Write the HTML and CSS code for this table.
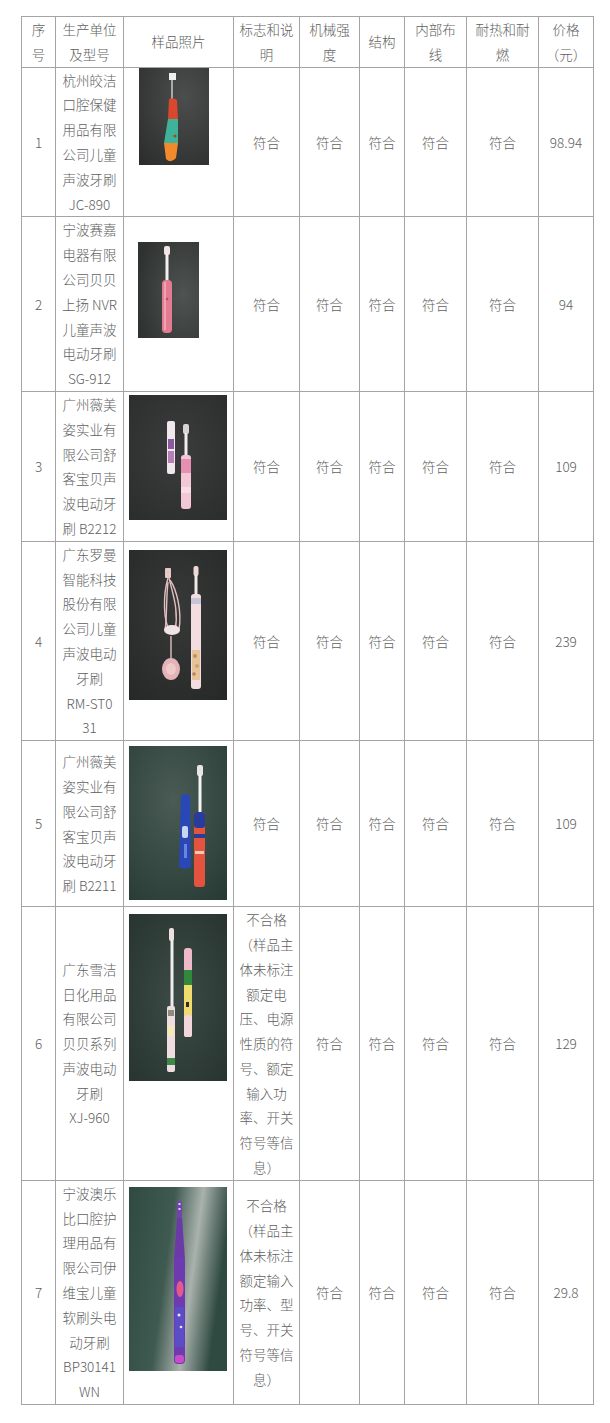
FILE: index.html
```html
<!DOCTYPE html>
<html lang="zh-CN">
<head>
<meta charset="utf-8">
<title>儿童电动牙刷比较试验结果</title>
<link rel="stylesheet" href="styles.css">
</head>
<body>
<table class="spec">
  <colgroup>
    <col class="c-no"><col class="c-maker"><col class="c-photo"><col class="c-mark"><col class="c-mech"><col class="c-struct"><col class="c-wire"><col class="c-heat"><col class="c-price">
  </colgroup>
  <thead>
    <tr>
      <th>序<br>号</th>
      <th>生产单位<br>及型号</th>
      <th>样品照片</th>
      <th>标志和说<br>明</th>
      <th>机械强<br>度</th>
      <th>结构</th>
      <th>内部布<br>线</th>
      <th>耐热和耐<br>燃</th>
      <th>价格<br>（元）</th>
    </tr>
  </thead>
  <tbody>
    <tr>
      <td>1</td>
      <td>杭州皎洁<br>口腔保健<br>用品有限<br>公司儿童<br>声波牙刷<br>JC-890</td>
      <td class="pic">
        <svg class="photo photo-1" viewBox="0 0 70 97">
          <defs>
            <radialGradient id="bg1" cx="0.65" cy="0.3" r="0.9">
              <stop offset="0" stop-color="#4b4e4d"/>
              <stop offset="1" stop-color="#2b2e2d"/>
            </radialGradient>
          </defs>
          <rect width="70" height="97" fill="url(#bg1)"/>
          <rect x="30" y="5" width="7" height="7" fill="#eeeeee"/>
          <rect x="32" y="12" width="2" height="20" fill="#a9a9a9"/>
          <path d="M30 31 Q34 29 38 32 L39 51 L29 51 Z" fill="#d9472e"/>
          <path d="M29 51 L39 51 L39 75 L25 75 Z" fill="#3fb39a"/>
          <path d="M25 75 L39 75 L37 90 Q32 96 27 91 Z" fill="#f08a2c"/>
          <circle cx="36" cy="68" r="1.6" fill="#9a4a22"/>
        </svg>
      </td>
      <td>符合</td><td>符合</td><td>符合</td><td>符合</td><td>符合</td>
      <td>98.94</td>
    </tr>
    <tr>
      <td>2</td>
      <td>宁波赛嘉<br>电器有限<br>公司贝贝<br>上扬 NVR<br>儿童声波<br>电动牙刷<br>SG-912</td>
      <td class="pic">
        <svg class="photo photo-2" viewBox="0 0 61 96">
          <defs>
            <radialGradient id="bg2" cx="0.75" cy="0.55" r="0.8">
              <stop offset="0" stop-color="#4f5452"/>
              <stop offset="1" stop-color="#2e3331"/>
            </radialGradient>
          </defs>
          <rect width="61" height="96" fill="url(#bg2)"/>
          <rect x="26" y="4" width="6" height="9" rx="2" fill="#f3e4e6"/>
          <rect x="27.5" y="12" width="3" height="27" fill="#f4f0f0"/>
          <rect x="24" y="38" width="10" height="53" rx="4" fill="#e47b90"/>
          <rect x="26" y="40" width="2" height="48" fill="#f0a3b2"/>
          <circle cx="29" cy="57" r="1.3" fill="#b94f66"/>
        </svg>
      </td>
      <td>符合</td><td>符合</td><td>符合</td><td>符合</td><td>符合</td>
      <td>94</td>
    </tr>
    <tr>
      <td>3</td>
      <td>广州薇美<br>姿实业有<br>限公司舒<br>客宝贝声<br>波电动牙<br>刷 B2212</td>
      <td class="pic">
        <svg class="photo photo-3" viewBox="0 0 98 125">
          <defs>
            <radialGradient id="bg3" cx="0.5" cy="0.45" r="0.8">
              <stop offset="0" stop-color="#3b3d3c"/>
              <stop offset="1" stop-color="#2a2c2b"/>
            </radialGradient>
          </defs>
          <rect width="98" height="125" fill="url(#bg3)"/>
          <rect x="38" y="26" width="8" height="53" rx="2" fill="#f1e8ee"/>
          <rect x="39" y="44" width="6" height="10" fill="#8a5a9e"/>
          <rect x="39" y="56" width="6" height="12" fill="#b77fb8"/>
          <rect x="54" y="29" width="6" height="10" rx="2" fill="#d9d3d6"/>
          <rect x="55.5" y="38" width="3" height="24" fill="#f1ecee"/>
          <rect x="52" y="60" width="10" height="54" rx="3" fill="#f2c7d6"/>
          <rect x="52" y="64" width="10" height="14" fill="#e58fb3"/>
          <rect x="52" y="92" width="10" height="6" fill="#f7dbe6"/>
        </svg>
      </td>
      <td>符合</td><td>符合</td><td>符合</td><td>符合</td><td>符合</td>
      <td>109</td>
    </tr>
    <tr>
      <td>4</td>
      <td>广东罗曼<br>智能科技<br>股份有限<br>公司儿童<br>声波电动<br>牙刷<br>RM-ST0<br>31</td>
      <td class="pic">
        <svg class="photo photo-4" viewBox="0 0 98 150">
          <defs>
            <radialGradient id="bg4" cx="0.5" cy="0.4" r="0.8">
              <stop offset="0" stop-color="#363938"/>
              <stop offset="1" stop-color="#262827"/>
            </radialGradient>
          </defs>
          <rect width="98" height="150" fill="url(#bg4)"/>
          <rect x="36" y="18" width="6" height="10" rx="1" fill="#e8c7c7"/>
          <g fill="none" stroke="#e4bfc1" stroke-width="1.4">
            <path d="M39 28 C34 45 34 70 41 82"/>
            <path d="M40 28 C44 45 50 60 46 82"/>
            <path d="M41 30 C48 40 53 62 50 80"/>
            <path d="M39 32 C37 50 38 70 36 80"/>
            <path d="M42 86 L42 108"/>
          </g>
          <ellipse cx="43" cy="80" rx="8" ry="5" fill="#f2e4e6"/>
          <ellipse cx="42" cy="119" rx="9" ry="11" fill="#e4b3b7"/>
          <ellipse cx="42" cy="119" rx="5" ry="6" fill="#eecaca"/>
          <rect x="64.5" y="16" width="5" height="10" rx="2" fill="#efd8d8"/>
          <rect x="65.5" y="25" width="3" height="20" fill="#f4e7e7"/>
          <rect x="62" y="44" width="10" height="95" rx="3" fill="#f3dde0"/>
          <rect x="62" y="48" width="10" height="6" fill="#c8c4d8"/>
          <rect x="63" y="100" width="8" height="30" fill="#e6c49a"/>
          <circle cx="66" cy="106" r="2" fill="#c78d6a"/>
          <circle cx="68" cy="116" r="2" fill="#d2a071"/>
          <circle cx="65" cy="124" r="1.8" fill="#b9825e"/>
        </svg>
      </td>
      <td>符合</td><td>符合</td><td>符合</td><td>符合</td><td>符合</td>
      <td>239</td>
    </tr>
    <tr>
      <td>5</td>
      <td>广州薇美<br>姿实业有<br>限公司舒<br>客宝贝声<br>波电动牙<br>刷 B2211</td>
      <td class="pic">
        <svg class="photo photo-5" viewBox="0 0 98 154">
          <defs>
            <radialGradient id="bg5" cx="0.45" cy="0.35" r="0.85">
              <stop offset="0" stop-color="#4a5b55"/>
              <stop offset="1" stop-color="#263a33"/>
            </radialGradient>
          </defs>
          <rect width="98" height="154" fill="url(#bg5)"/>
          <path d="M52 50 Q56 46 61 50 L62 121 Q56 124 50 121 Z" fill="#2a47b8"/>
          <rect x="53" y="80" width="6" height="12" rx="2" fill="#c9d4f0"/>
          <rect x="55" y="98" width="3" height="14" fill="#6a86d8"/>
          <rect x="68" y="19" width="6" height="11" rx="2" fill="#e6e6e6"/>
          <rect x="69.5" y="29" width="3" height="38" fill="#f4f4f4"/>
          <rect x="65" y="66" width="11" height="75" rx="3" fill="#e3533d"/>
          <rect x="65" y="66" width="11" height="16" rx="3" fill="#283c9c"/>
          <rect x="65" y="88" width="11" height="4" fill="#283c9c"/>
          <rect x="66" y="105" width="9" height="3" fill="#f4c9b7"/>
        </svg>
      </td>
      <td>符合</td><td>符合</td><td>符合</td><td>符合</td><td>符合</td>
      <td>109</td>
    </tr>
    <tr>
      <td>6</td>
      <td>广东雪洁<br>日化用品<br>有限公司<br>贝贝系列<br>声波电动<br>牙刷<br>XJ-960</td>
      <td class="pic">
        <svg class="photo photo-6" viewBox="0 0 98 167">
          <defs>
            <radialGradient id="bg6" cx="0.5" cy="0.5" r="0.8">
              <stop offset="0" stop-color="#3d4b46"/>
              <stop offset="1" stop-color="#24312c"/>
            </radialGradient>
          </defs>
          <rect width="98" height="167" fill="url(#bg6)"/>
          <rect x="40" y="14" width="5" height="13" rx="2" fill="#eedfe0"/>
          <rect x="41.5" y="26" width="3" height="68" fill="#eeeeee"/>
          <rect x="38" y="92" width="8" height="66" rx="2" fill="#f0dde2"/>
          <rect x="39" y="96" width="6" height="6" fill="#8d8d7a"/>
          <rect x="39" y="112" width="6" height="10" fill="#f5e9b8"/>
          <rect x="38" y="144" width="8" height="7" fill="#3c8a46"/>
          <rect x="55" y="34" width="8" height="89" rx="3" fill="#eeb9c9"/>
          <rect x="55" y="56" width="8" height="15" fill="#2f8a3c"/>
          <rect x="55" y="71" width="8" height="30" fill="#f1dc6e"/>
          <rect x="57" y="88" width="3" height="5" fill="#2e2e2e"/>
          <rect x="55" y="101" width="8" height="22" rx="2" fill="#f1d6dc"/>
        </svg>
      </td>
      <td>不合格<br>（样品主<br>体未标注<br>额定电<br>压、电源<br>性质的符<br>号、额定<br>输入功<br>率、开关<br>符号等信<br>息）</td>
      <td>符合</td><td>符合</td><td>符合</td><td>符合</td>
      <td>129</td>
    </tr>
    <tr>
      <td>7</td>
      <td>宁波澳乐<br>比口腔护<br>理用品有<br>限公司伊<br>维宝儿童<br>软刷头电<br>动牙刷<br>BP30141<br>WN</td>
      <td class="pic">
        <svg class="photo photo-7" viewBox="0 0 98 184">
          <defs>
            <linearGradient id="bg7" x1="0" y1="0" x2="1" y2="0.25">
              <stop offset="0" stop-color="#2f4a41"/>
              <stop offset="0.45" stop-color="#3f5a51"/>
              <stop offset="0.72" stop-color="#aab2ad"/>
              <stop offset="0.85" stop-color="#6d7f78"/>
              <stop offset="1" stop-color="#2f4a41"/>
            </linearGradient>
          </defs>
          <rect width="98" height="184" fill="url(#bg7)"/>
          <rect x="48" y="14" width="5" height="18" rx="2" fill="#7442b0"/>
          <rect x="49.5" y="16" width="2" height="2" fill="#d8d8f2"/>
          <rect x="49.5" y="21" width="2" height="2" fill="#d8d8f2"/>
          <path d="M48 31 L53 31 L56 72 L45 72 Z" fill="#6b3aa6"/>
          <rect x="45" y="70" width="11" height="107" rx="4" fill="#6e3ab0"/>
          <ellipse cx="51" cy="102" rx="3.5" ry="8" fill="#e45a8a"/>
          <rect x="46" y="120" width="9" height="40" fill="#5b4cc8"/>
          <circle cx="50" cy="128" r="1.5" fill="#ececf8"/>
          <circle cx="52" cy="140" r="1.3" fill="#ececf8"/>
          <rect x="46" y="168" width="9" height="8" rx="3" fill="#c84cc8"/>
        </svg>
      </td>
      <td>不合格<br>（样品主<br>体未标注<br>额定输入<br>功率、型<br>号、开关<br>符号等信<br>息）</td>
      <td>符合</td><td>符合</td><td>符合</td><td>符合</td>
      <td>29.8</td>
    </tr>
  </tbody>
</table>
</body>
</html>
```
FILE: styles.css
```css
html, body {
  margin: 0;
  padding: 0;
  background: #ffffff;
}

body {
  font-family: "Noto Sans CJK SC", "Noto Sans", "Liberation Sans", sans-serif;
  font-size: 13.5px;
  font-weight: 300;
  color: #606060;
}

.spec {
  border-collapse: collapse;
  table-layout: fixed;
  width: 572px;
  margin: 16px 0 0 21px;
}

.c-no { width: 34px; }
.c-maker { width: 68px; }
.c-photo { width: 110px; }
.c-mark { width: 66px; }
.c-mech { width: 60px; }
.c-struct { width: 45px; }
.c-wire { width: 62px; }
.c-heat { width: 72px; }
.c-price { width: 55px; }

.spec th,
.spec td {
  border: 1px solid #a4a4a4;
  padding: 0 2px;
  text-align: center;
  vertical-align: middle;
  line-height: 24.8px;
  font-weight: 300;
  white-space: nowrap;
}

.spec td.pic {
  padding: 0;
  text-align: left;
  vertical-align: top;
}

.photo {
  display: block;
}

.photo-1 { width: 70px; height: 97px; margin: 0 0 0 15px; }
.photo-2 { width: 61px; height: 96px; margin: 25px 0 0 14px; }
.photo-3 { width: 98px; height: 125px; margin: 3px 0 0 5px; }
.photo-4 { width: 98px; height: 150px; margin: 8px 0 0 5px; }
.photo-5 { width: 98px; height: 154px; margin: 5px 0 6px 5px; }
.photo-6 { width: 98px; height: 167px; margin: 7px 0 0 5px; }
.photo-7 { width: 98px; height: 184px; margin: 6px 0 0 5px; }
```
